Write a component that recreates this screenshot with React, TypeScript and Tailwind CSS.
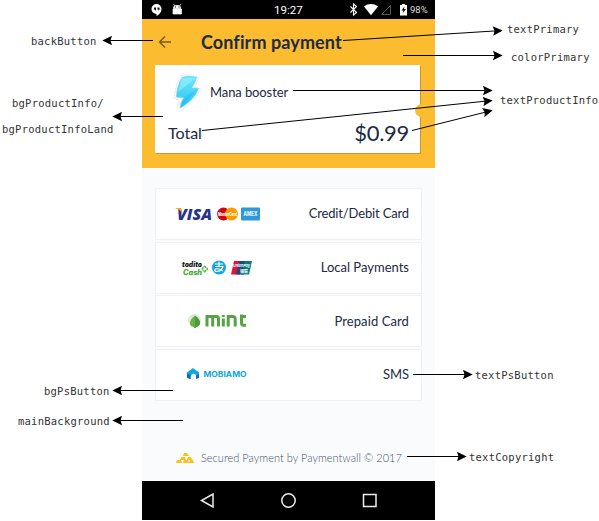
import type { ReactNode } from "react";

const labels = [
  { text: "backButton", pos: "left-[31px] top-[34px]" },
  { text: "bgProductInfo/", pos: "left-[12px] top-[96px]" },
  { text: "bgProductInfoLand", pos: "left-[2px] top-[122px]" },
  { text: "bgPsButton", pos: "left-[44px] top-[384px]" },
  { text: "mainBackground", pos: "left-[18px] top-[414px]" },
  { text: "textPrimary", pos: "left-[507px] top-[22px]" },
  { text: "colorPrimary", pos: "left-[511px] top-[50px]" },
  { text: "textProductInfo", pos: "left-[500px] top-[93px]" },
  { text: "textPsButton", pos: "left-[475px] top-[368px]" },
  { text: "textCopyright", pos: "left-[469px] top-[450px]" },
];

const arrows = [
  [153, 40.5, 103, 40.5],
  [163, 116.5, 113, 116.5],
  [173, 390.5, 113, 390.5],
  [183, 420.5, 113, 420.5],
  [343, 40.5, 502, 30.5],
  [403, 55.5, 502, 55.5],
  [293, 90.5, 492, 90.5],
  [202, 130.5, 492, 100.5],
  [412, 130.5, 492, 110.5],
  [413, 374.5, 472, 374.5],
  [407, 456.5, 466, 456.5],
];

function Annotations() {
  return (
    <>
      <svg className="pointer-events-none absolute inset-0" width="599" height="521">
        <defs>
          <marker id="head" markerWidth="10" markerHeight="10" refX="9" refY="5" orient="auto" markerUnits="userSpaceOnUse">
            <path d="M0 0.300 L9.700 5 L0 9.700 L1.500 5 Z" fill="#000" />
          </marker>
        </defs>
        {arrows.map(([x1, y1, x2, y2], i) => (
          <line key={i} x1={x1} y1={y1} x2={x2} y2={y2} stroke="#000" strokeWidth="1" markerEnd="url(#head)" />
        ))}
      </svg>
      {labels.map((l) => (
        <span key={l.text} className={`absolute whitespace-nowrap font-['DejaVu_Sans_Mono',monospace] text-[10.5px] leading-[14px] tracking-[0.24px] text-[#333] ${l.pos}`}>
          {l.text}
        </span>
      ))}
    </>
  );
}

function StatusBar() {
  return (
    <div className="relative flex h-[19px] items-center bg-black text-white">
      <svg className="block" width="293" height="19">
        <path d="M14.5 4a5 5 0 0 0 0 10v2c3-1.500 5-4 5-7a5 5 0 0 0-5-5Z" fill="#fff" />
        <path d="M12 7.500h2v2l-1 1.500v-1.500h-1zM15.500 7.500h2v2l-1 1.500v-1.500h-1z" fill="#000" />
        <path d="M31.500 7.500c.5-1.500 1.500-2 2.500-2h2c1.500 0 2.300.7 2.700 2v1h-7.200zM31 9h8.500v5H31zM31.500 4l1.500 2M39 4l-1.500 2" fill="#fff" stroke="#fff" strokeWidth=".7" />
        <path d="M33 6.500h1v1h-1zM36.500 6.500h1v1h-1z" fill="#000" />
        <path d="M208.500 6.500l6 6-3 2.500V4l3 2.500-6 6" fill="none" stroke="#fff" strokeWidth="1.100" />
        <path d="M222 6.500c4-3.300 10-3.300 14 0l-7 8.800Z" fill="#fff" />
        <path d="M239.500 14.500h9V5.500Z" fill="none" stroke="#555" strokeWidth="1" />
        <path d="M258 5h2V4h3v1h2v10.500h-7Z" fill="#fff" />
        <path d="M262.500 6.500l-3 4h2l-1 3 3.500-4.500h-2z" fill="#000" />
      </svg>
      <span className="absolute left-[132px] top-[2px] font-[Roboto,sans-serif] text-[11.5px] leading-[16px]">19:27</span>
      <span className="absolute left-[268px] top-[3px] font-[Roboto,sans-serif] text-[9.5px] leading-[14px] text-[#ddd]">98%</span>
    </div>
  );
}

function ProductCard() {
  return (
    <div className="relative ml-[13px] mt-[10px] h-[88px] w-[265px] rounded-[1px] bg-white pl-[13px] pr-[11px] shadow-[1px_1px_0_0_#c99a2b]">
      <div className="flex h-[54px] items-center">
        <svg width="42" height="54" className="shrink-0">
          <path d="M13 11Q22 8 31 12.500L27 22 33 24Q27 37 12 45.500Q7 44 11 36L6 33Q8 18 13 11Z" fill="#f6f7f8" stroke="#d7dade" strokeWidth=".6" strokeDasharray="2 1" />
          <path d="M14 12.500Q21 10 28.500 12.500Q27 18 23.500 23L30.500 23.500Q27 34 12.500 43Q12 38 16 32.500L8.500 32Q9 21 14 12.500Z" fill="url(#bolt)" stroke="#62d4ed" strokeWidth=".7" />
          <path d="M14 13L28 13 10 27Z" fill="#a2f2fc" opacity=".5" />
          <path d="M17 32L30 24 13 42Z" fill="#14b9f2" opacity=".4" />
          <defs>
            <linearGradient id="bolt" x1="0" y1="0" x2="0" y2="1">
              <stop offset="0" stopColor="#73e8f8" />
              <stop offset="1" stopColor="#24bff5" />
            </linearGradient>
          </defs>
        </svg>
        <span className="pt-[1px] text-[13px] tracking-[-0.1px]">Mana booster</span>
      </div>
      <div className="flex h-[27px] items-center justify-between">
        <span className="text-[16px] tracking-[0px]">Total</span>
        <span className="text-[22px] tracking-[-0.3px]">$0.99</span>
      </div>
      <span className="absolute -right-[2px] top-[39px] h-[13px] w-[7px] rounded-l-full bg-[#fbbc2f]" />
    </div>
  );
}

const logoText = "Inter, sans-serif";

function CardLogos() {
  return (
    <svg width="100" height="50">
      <text x="21" y="30.500" fontFamily="Open Sans, sans-serif" fontSize="15.500" fontWeight="800" fontStyle="italic" textLength="35" lengthAdjust="spacingAndGlyphs" fill="#28328d">VISA</text>
      <path d="M19 19h6l2 6q-2-4-8-6" fill="#f6a21d" />
      <circle cx="67.500" cy="25" r="6.500" fill="#ce0713" />
      <circle cx="75.500" cy="25" r="6.500" fill="#ff9900" />
      <text x="62" y="27" fontFamily={logoText} fontSize="4.500" fontWeight="800" textLength="19" lengthAdjust="spacingAndGlyphs" fill="#fff">MasterCard</text>
      <rect x="85" y="18.500" width="19" height="13" rx="1" fill="#3098d8" />
      <text x="87.500" y="27" fontFamily={logoText} fontSize="5.500" fontWeight="800" textLength="14" lengthAdjust="spacingAndGlyphs" fill="#e3f5ff">AMEX</text>
    </svg>
  );
}

function LocalLogos() {
  return (
    <svg width="100" height="50">
      <text x="26" y="24" fontFamily={logoText} fontSize="7" fontWeight="900" fontStyle="italic" textLength="20" lengthAdjust="spacingAndGlyphs" fill="#161b16">todito</text>
      <text x="27" y="31.500" fontFamily={logoText} fontSize="7" fontWeight="800" fontStyle="italic" textLength="19" lengthAdjust="spacingAndGlyphs" fill="#35ac28">Cash</text>
      <path d="M46 25h2v-2h1.500v2h2v2h-2v2h-1.500v-2h-2z" fill="#fff" stroke="#35ac28" strokeWidth=".8" />
      <circle cx="63" cy="24.500" r="7" fill="#12a5e8" />
      <path d="M59 21h8M63 18.500v5M59 23.500h8q-2 5-6 5-3 0-2-2 2-2 8 1.500" fill="none" stroke="#fff" strokeWidth="1.200" />
      <path d="M78 18h9l-3 13.500h-9z" fill="#df153d" />
      <path d="M83 18h8l-3 13.500h-8z" fill="#174a79" />
      <path d="M89 18h7l-3 13.500h-8z" fill="#057a82" />
      <text x="77" y="24" fontFamily={logoText} fontSize="4" fontWeight="700" fontStyle="italic" textLength="17" lengthAdjust="spacingAndGlyphs" fill="#fff">UnionPay</text>
      <text x="84" y="30" fontFamily="Noto Sans CJK SC, sans-serif" fontSize="4" fontWeight="700" textLength="8" fill="#fff">银联</text>
    </svg>
  );
}

function MintLogo() {
  return (
    <svg width="100" height="50">
      <circle cx="38.500" cy="24.500" r="6.500" fill="#dcebd0" />
      <path d="M39 19.500q-5 4-5 8 0 3 4 3.500v1h2v-1q4-1 4-4 0-4-5-7.500" fill="#68b044" />
      <path d="M39 20v11q5-.5 5-4 0-4-5-7" fill="#3c9135" opacity=".65" />
      <path d="M51 30.500V20.500h9.500q2 0 2 2v8M56.700 20.500v10M67.300 22.500v8M72.200 30.500v-10h4.500q2.500 0 2.500 2.500v7.500M85.500 18.500v8.500q0 2.200 2 2.200h2.500M84.500 20.500h5.500" fill="none" stroke="#56a346" strokeWidth="3" />
      <path d="M65.800 19h3v2h-3z" fill="#56a346" />
    </svg>
  );
}

function MobiamoLogo() {
  return (
    <svg width="100" height="50">
      <path d="M31 28v-5.500l6-4.500 6 4.500v5l-2.500 1.500q1-4-3-5.500-4 1.500-2.500 5.500Z" fill="#10a7df" />
      <path d="M31 24l3.500 1v4l-3.500-1.500M40 26l3-2v3.500l-3 1.500" fill="#0b6dae" />
      <text x="47.500" y="27" fontFamily={logoText} fontSize="7" fontWeight="700" textLength="43" lengthAdjust="spacingAndGlyphs" fill="#08a5df">MOBIAMO</text>
    </svg>
  );
}

function PaymentRow({ logo, children, tracking }: { logo: ReactNode; children: ReactNode; tracking: string }) {
  return (
    <div className="flex h-[52px] w-[267px] items-center justify-between border border-[#eff1f4] bg-white pr-[12px]">
      <div className="[&>svg]:block [&>svg]:overflow-visible">{logo}</div>
      <span className={`text-[13px] ${tracking}`}>{children}</span>
    </div>
  );
}

export default function App() {
  return (
    <main className="relative h-[521px] w-[599px] overflow-hidden bg-white">
      <section className="ml-[142px] flex h-[520px] w-[293px] flex-col bg-[#f9fbfd] font-[Lato,sans-serif] text-[#202a45]">
        <StatusBar />
        <header className="h-[149px] bg-[#fbbc2f]">
          <div className="flex h-[36px] items-end">
            <svg width="59" height="26" className="shrink-0">
              <path d="M29 13H17.500M23 7.500L17.500 13l5.500 5.500" fill="none" stroke="#795b23" strokeWidth="1.500" />
            </svg>
            <h1 className="text-[18px] font-bold leading-[26px] tracking-[0.1px]">Confirm payment</h1>
          </div>
          <ProductCard />
        </header>
        <div className="ml-[13px] mt-[20px] flex h-[213px] flex-col justify-between">
          <PaymentRow logo={<CardLogos />} tracking="tracking-[-0.15px]">Credit/Debit Card</PaymentRow>
          <PaymentRow logo={<LocalLogos />} tracking="tracking-[0px]">Local Payments</PaymentRow>
          <PaymentRow logo={<MintLogo />} tracking="tracking-[0.1px]">Prepaid Card</PaymentRow>
          <PaymentRow logo={<MobiamoLogo />} tracking="tracking-[-0.1px]">SMS</PaymentRow>
        </div>
        <footer className="flex flex-1 items-end pb-[13px] pl-[34px]">
          <svg width="25" height="20" className="shrink-0">
            <path d="M7 8l1-3h3l2 3zM4 12l1-3h4l1 3zM11 12l1-3h3l1 3zM0 15l1-3h4l1 3zM7 15l1-3h4l1 3zM13 15l1-3h3l1 3z" fill="#fdbf19" />
          </svg>
          <span className="whitespace-nowrap text-[11px] font-light leading-[20px] tracking-[0.02px] text-[#465069]">Secured Payment by Paymentwall © 2017</span>
        </footer>
        <nav className="h-[39px] bg-black">
          <svg width="293" height="39" fill="none" stroke="#eee" strokeWidth="1.500">
            <path d="M71 13v13L59.500 19.500Z" />
            <circle cx="146.500" cy="19.500" r="6.700" />
            <path d="M221.500 13.500h12.500v12h-12.500z" />
          </svg>
        </nav>
      </section>
      <Annotations />
    </main>
  );
}
